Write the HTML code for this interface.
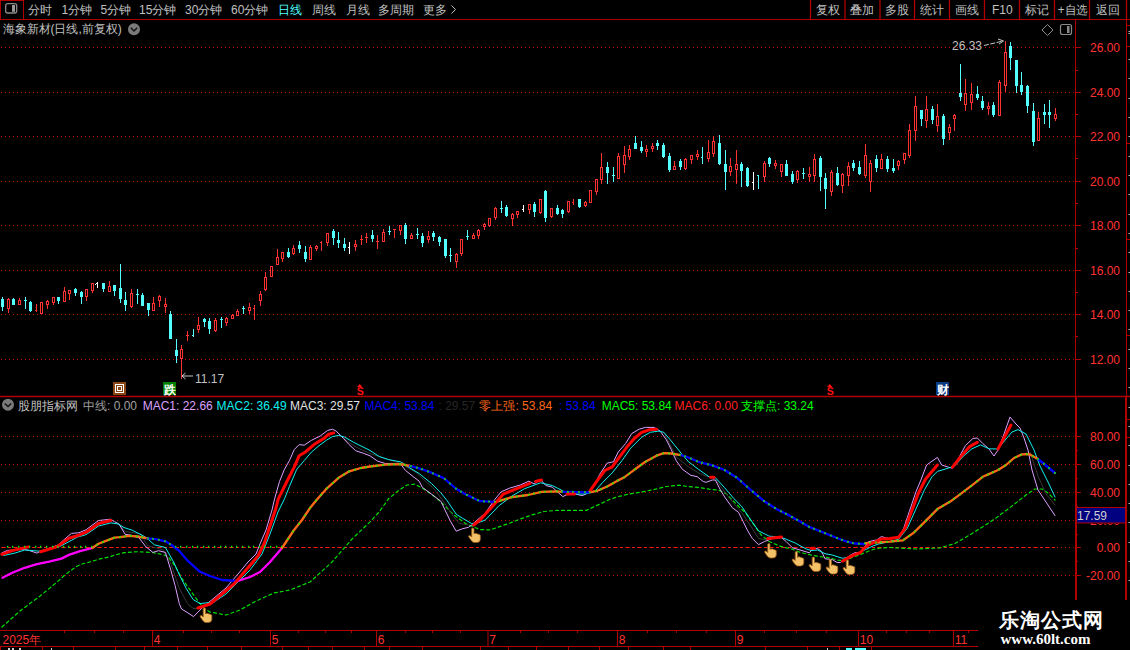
<!DOCTYPE html>
<html><head><meta charset="utf-8"><style>
html,body{margin:0;padding:0;background:#000;overflow:hidden}
svg{display:block;font-family:"Liberation Sans", sans-serif}
</style></head><body>
<svg width="1130" height="650" viewBox="0 0 1130 650">
<rect width="1130" height="650" fill="#000"/>
<rect x="0" y="0" width="1130" height="19" fill="#000"/>
<line x1="0" y1="19.5" x2="1130" y2="19.5" stroke="#b00000" stroke-width="1"/>
<rect x="0.5" y="0.5" width="23" height="19" fill="none" stroke="#b00000"/>
<rect x="5.7" y="3.7" width="11" height="9.3" rx="2" fill="none" stroke="#8a8a8a" stroke-width="1.3"/>
<rect x="12" y="5" width="3" height="6.8" fill="#999"/>
<text x="28" y="13.5" fill="#c0c0c0" font-size="12">分时</text>
<text x="61.5" y="13.5" fill="#c0c0c0" font-size="12">1分钟</text>
<text x="100.5" y="13.5" fill="#c0c0c0" font-size="12">5分钟</text>
<text x="139" y="13.5" fill="#c0c0c0" font-size="12">15分钟</text>
<text x="185" y="13.5" fill="#c0c0c0" font-size="12">30分钟</text>
<text x="231" y="13.5" fill="#c0c0c0" font-size="12">60分钟</text>
<text x="278" y="13.5" fill="#54ffff" font-size="12">日线</text>
<text x="312" y="13.5" fill="#c0c0c0" font-size="12">周线</text>
<text x="346" y="13.5" fill="#c0c0c0" font-size="12">月线</text>
<text x="378" y="13.5" fill="#c0c0c0" font-size="12">多周期</text>
<text x="422.5" y="13.5" fill="#c0c0c0" font-size="12">更多</text>
<path d="M451.5 5.5 L455.5 9.5 L451.5 13.5" fill="none" stroke="#c0c0c0" stroke-width="1"/>
<line x1="810.5" y1="0" x2="810.5" y2="19" stroke="#b00000" stroke-width="1.3"/>
<line x1="845" y1="0" x2="845" y2="19" stroke="#b00000" stroke-width="1.3"/>
<line x1="880" y1="0" x2="880" y2="19" stroke="#b00000" stroke-width="1.3"/>
<line x1="914.5" y1="0" x2="914.5" y2="19" stroke="#b00000" stroke-width="1.3"/>
<line x1="949.5" y1="0" x2="949.5" y2="19" stroke="#b00000" stroke-width="1.3"/>
<line x1="984.5" y1="0" x2="984.5" y2="19" stroke="#b00000" stroke-width="1.3"/>
<line x1="1019.5" y1="0" x2="1019.5" y2="19" stroke="#b00000" stroke-width="1.3"/>
<line x1="1054.5" y1="0" x2="1054.5" y2="19" stroke="#b00000" stroke-width="1.3"/>
<line x1="1089.5" y1="0" x2="1089.5" y2="19" stroke="#b00000" stroke-width="1.3"/>
<line x1="1126.5" y1="0" x2="1126.5" y2="19" stroke="#b00000" stroke-width="1.3"/>
<text x="816" y="13.5" fill="#c0c0c0" font-size="12">复权</text>
<text x="849.6" y="13.5" fill="#c0c0c0" font-size="12">叠加</text>
<text x="884.5" y="13.5" fill="#c0c0c0" font-size="12">多股</text>
<text x="919.6" y="13.5" fill="#c0c0c0" font-size="12">统计</text>
<text x="954.5" y="13.5" fill="#c0c0c0" font-size="12">画线</text>
<text x="992" y="13.5" fill="#c0c0c0" font-size="12">F10</text>
<text x="1025" y="13.5" fill="#c0c0c0" font-size="12">标记</text>
<text x="1057.8" y="13.5" fill="#c0c0c0" font-size="12" textLength="30" lengthAdjust="spacingAndGlyphs">+自选</text>
<text x="1096" y="13.5" fill="#c0c0c0" font-size="12">返回</text>
<text x="2.5" y="33.3" fill="#c0c0c0" font-size="12">海象新材(日线,前复权)</text>
<circle cx="134" cy="29.2" r="6" fill="#7a7a7a"/>
<path d="M130.8 27.8 L134 31 L137.2 27.8" fill="none" stroke="#111" stroke-width="1.4"/>
<path d="M1047.5 24.5 L1053 30 L1047.5 35.5 L1042 30 Z" fill="none" stroke="#8a8a8a" stroke-width="1"/>
<rect x="1060.5" y="24.5" width="11" height="10" rx="2" fill="none" stroke="#8a8a8a" stroke-width="1.2"/>
<rect x="1067" y="26" width="2.5" height="7" fill="#8a8a8a"/>
<line x1="0" y1="47.5" x2="1075" y2="47.5" stroke="#b80000" stroke-width="1" stroke-dasharray="1 3" stroke-dashoffset="-1"/>
<line x1="1075" y1="47.5" x2="1081" y2="47.5" stroke="#b00000" stroke-width="1"/>
<text x="1120" y="52" fill="#ff3232" font-size="12" text-anchor="end">26.00</text>
<line x1="0" y1="92.5" x2="1075" y2="92.5" stroke="#b80000" stroke-width="1" stroke-dasharray="1 3" stroke-dashoffset="-1"/>
<line x1="1075" y1="92.5" x2="1081" y2="92.5" stroke="#b00000" stroke-width="1"/>
<text x="1120" y="97" fill="#ff3232" font-size="12" text-anchor="end">24.00</text>
<line x1="0" y1="136.5" x2="1075" y2="136.5" stroke="#b80000" stroke-width="1" stroke-dasharray="1 3" stroke-dashoffset="-1"/>
<line x1="1075" y1="136.5" x2="1081" y2="136.5" stroke="#b00000" stroke-width="1"/>
<text x="1120" y="141" fill="#ff3232" font-size="12" text-anchor="end">22.00</text>
<line x1="0" y1="181.5" x2="1075" y2="181.5" stroke="#b80000" stroke-width="1" stroke-dasharray="1 3" stroke-dashoffset="-1"/>
<line x1="1075" y1="181.5" x2="1081" y2="181.5" stroke="#b00000" stroke-width="1"/>
<text x="1120" y="186" fill="#ff3232" font-size="12" text-anchor="end">20.00</text>
<line x1="0" y1="225.5" x2="1075" y2="225.5" stroke="#b80000" stroke-width="1" stroke-dasharray="1 3" stroke-dashoffset="-1"/>
<line x1="1075" y1="225.5" x2="1081" y2="225.5" stroke="#b00000" stroke-width="1"/>
<text x="1120" y="230" fill="#ff3232" font-size="12" text-anchor="end">18.00</text>
<line x1="0" y1="270.5" x2="1075" y2="270.5" stroke="#b80000" stroke-width="1" stroke-dasharray="1 3" stroke-dashoffset="-1"/>
<line x1="1075" y1="270.5" x2="1081" y2="270.5" stroke="#b00000" stroke-width="1"/>
<text x="1120" y="275" fill="#ff3232" font-size="12" text-anchor="end">16.00</text>
<line x1="0" y1="314.5" x2="1075" y2="314.5" stroke="#b80000" stroke-width="1" stroke-dasharray="1 3" stroke-dashoffset="-1"/>
<line x1="1075" y1="314.5" x2="1081" y2="314.5" stroke="#b00000" stroke-width="1"/>
<text x="1120" y="319" fill="#ff3232" font-size="12" text-anchor="end">14.00</text>
<line x1="0" y1="359.5" x2="1075" y2="359.5" stroke="#b80000" stroke-width="1" stroke-dasharray="1 3" stroke-dashoffset="-1"/>
<line x1="1075" y1="359.5" x2="1081" y2="359.5" stroke="#b00000" stroke-width="1"/>
<text x="1120" y="364" fill="#ff3232" font-size="12" text-anchor="end">12.00</text>
<line x1="1075" y1="70.5" x2="1078" y2="70.5" stroke="#b00000" stroke-width="1"/>
<line x1="1075" y1="114.5" x2="1078" y2="114.5" stroke="#b00000" stroke-width="1"/>
<line x1="1075" y1="158.5" x2="1078" y2="158.5" stroke="#b00000" stroke-width="1"/>
<line x1="1075" y1="203.5" x2="1078" y2="203.5" stroke="#b00000" stroke-width="1"/>
<line x1="1075" y1="248.5" x2="1078" y2="248.5" stroke="#b00000" stroke-width="1"/>
<line x1="1075" y1="292.5" x2="1078" y2="292.5" stroke="#b00000" stroke-width="1"/>
<line x1="1075" y1="336.5" x2="1078" y2="336.5" stroke="#b00000" stroke-width="1"/>
<line x1="1075.5" y1="19" x2="1075.5" y2="396" stroke="#b00000" stroke-width="1"/>
<line x1="1076" y1="396" x2="1076" y2="600" stroke="#b00000" stroke-width="2"/>
<line x1="1126.5" y1="19" x2="1126.5" y2="396" stroke="#b00000" stroke-width="1"/>
<line x1="1126" y1="396" x2="1126" y2="600" stroke="#b00000" stroke-width="2"/>
<line x1="1126" y1="25.5" x2="1130" y2="25.5" stroke="#b00000" stroke-width="1"/>
<rect x="1127" y="25" width="3" height="1" fill="#b00000"/>
<rect x="1127" y="46" width="3" height="1" fill="#b00000"/>
<rect x="1127" y="143" width="3" height="1" fill="#b00000"/>
<rect x="1127" y="239" width="3" height="1" fill="#b00000"/>
<rect x="1127" y="335" width="3" height="1" fill="#b00000"/>
<rect x="1127" y="419" width="3" height="1" fill="#b00000"/>
<rect x="1127" y="437" width="3" height="1" fill="#b00000"/>
<rect x="1128.5" y="59" width="1.5" height="1" fill="#bbbbbb"/>
<rect x="1128.5" y="78" width="1.5" height="1" fill="#bbbbbb"/>
<rect x="1128.5" y="98" width="1.5" height="1" fill="#bbbbbb"/>
<rect x="1128.5" y="117" width="1.5" height="1" fill="#bbbbbb"/>
<rect x="1128.5" y="136" width="1.5" height="1" fill="#bbbbbb"/>
<rect x="1128.5" y="156" width="1.5" height="1" fill="#bbbbbb"/>
<rect x="1128.5" y="175" width="1.5" height="1" fill="#bbbbbb"/>
<rect x="1128.5" y="194" width="1.5" height="1" fill="#bbbbbb"/>
<rect x="1128.5" y="214" width="1.5" height="1" fill="#bbbbbb"/>
<rect x="1128.5" y="233" width="1.5" height="1" fill="#bbbbbb"/>
<rect x="1128.5" y="252" width="1.5" height="1" fill="#bbbbbb"/>
<rect x="1128.5" y="272" width="1.5" height="1" fill="#bbbbbb"/>
<rect x="1128.5" y="291" width="1.5" height="1" fill="#bbbbbb"/>
<rect x="1128.5" y="310" width="1.5" height="1" fill="#bbbbbb"/>
<rect x="1128.5" y="329" width="1.5" height="1" fill="#bbbbbb"/>
<rect x="1128.5" y="349" width="1.5" height="1" fill="#bbbbbb"/>
<rect x="1128.5" y="368" width="1.5" height="1" fill="#bbbbbb"/>
<rect x="1128.5" y="387" width="1.5" height="1" fill="#bbbbbb"/>
<rect x="1128.5" y="407" width="1.5" height="1" fill="#bbbbbb"/>
<rect x="1128.5" y="426" width="1.5" height="1" fill="#bbbbbb"/>
<rect x="1128.5" y="445" width="1.5" height="1" fill="#bbbbbb"/>
<rect x="1128.5" y="465" width="1.5" height="1" fill="#bbbbbb"/>
<rect x="1128.5" y="484" width="1.5" height="1" fill="#bbbbbb"/>
<rect x="1128.5" y="503" width="1.5" height="1" fill="#bbbbbb"/>
<rect x="1128.5" y="522" width="1.5" height="1" fill="#bbbbbb"/>
<rect x="1128.5" y="542" width="1.5" height="1" fill="#bbbbbb"/>
<rect x="1128.5" y="561" width="1.5" height="1" fill="#bbbbbb"/>
<rect x="1128.5" y="580" width="1.5" height="1" fill="#bbbbbb"/>
<rect x="1128.5" y="600" width="1.5" height="1" fill="#bbbbbb"/>
<rect x="1128.5" y="31" width="1.5" height="1" fill="#bbb"/><rect x="1128.5" y="33" width="1.5" height="1" fill="#bbb"/>
<line x1="0" y1="396.5" x2="1130" y2="396.5" stroke="#b00000" stroke-width="1.6"/>
<rect x="2" y="297" width="1" height="14" fill="#54ffff"/>
<rect x="1" y="299" width="3" height="8" fill="#54ffff"/>
<rect x="8" y="298" width="1" height="15" fill="#ff3232"/>
<rect x="7" y="299" width="3" height="10" fill="#ff3232"/>
<rect x="8" y="300" width="1" height="8" fill="#000"/>
<rect x="13" y="298" width="1" height="7" fill="#54ffff"/>
<rect x="12" y="299" width="3" height="6" fill="#54ffff"/>
<rect x="19" y="298" width="1" height="7" fill="#ff3232"/>
<rect x="18" y="300" width="3" height="5" fill="#ff3232"/>
<rect x="19" y="301" width="1" height="3" fill="#000"/>
<rect x="25" y="297" width="1" height="12" fill="#54ffff"/>
<rect x="24" y="300" width="3" height="1" fill="#54ffff"/>
<rect x="30" y="301" width="1" height="11" fill="#54ffff"/>
<rect x="29" y="302" width="3" height="9" fill="#54ffff"/>
<rect x="36" y="304" width="1" height="8" fill="#ff3232"/>
<rect x="35" y="310" width="1" height="1" fill="#ff3232"/>
<rect x="41" y="302" width="1" height="12" fill="#ff3232"/>
<rect x="40" y="302" width="3" height="12" fill="#ff3232"/>
<rect x="41" y="303" width="1" height="10" fill="#000"/>
<rect x="47" y="300" width="1" height="9" fill="#ff3232"/>
<rect x="46" y="301" width="3" height="4" fill="#ff3232"/>
<rect x="47" y="302" width="1" height="2" fill="#000"/>
<rect x="53" y="297" width="1" height="8" fill="#ff3232"/>
<rect x="52" y="297" width="3" height="6" fill="#ff3232"/>
<rect x="53" y="298" width="1" height="4" fill="#000"/>
<rect x="58" y="297" width="1" height="7" fill="#54ffff"/>
<rect x="57" y="297" width="3" height="4" fill="#54ffff"/>
<rect x="64" y="287" width="1" height="15" fill="#ff3232"/>
<rect x="63" y="291" width="3" height="11" fill="#ff3232"/>
<rect x="64" y="292" width="1" height="9" fill="#000"/>
<rect x="69" y="290" width="1" height="10" fill="#ff3232"/>
<rect x="68" y="290" width="3" height="4" fill="#ff3232"/>
<rect x="69" y="291" width="1" height="2" fill="#000"/>
<rect x="75" y="288" width="1" height="8" fill="#54ffff"/>
<rect x="74" y="289" width="3" height="4" fill="#54ffff"/>
<rect x="81" y="291" width="1" height="13" fill="#54ffff"/>
<rect x="80" y="292" width="3" height="5" fill="#54ffff"/>
<rect x="86" y="289" width="1" height="12" fill="#ff3232"/>
<rect x="85" y="289" width="3" height="8" fill="#ff3232"/>
<rect x="86" y="290" width="1" height="6" fill="#000"/>
<rect x="92" y="283" width="1" height="10" fill="#ff3232"/>
<rect x="91" y="283" width="3" height="8" fill="#ff3232"/>
<rect x="92" y="284" width="1" height="6" fill="#000"/>
<rect x="103" y="283" width="1" height="9" fill="#54ffff"/>
<rect x="102" y="283" width="3" height="6" fill="#54ffff"/>
<rect x="109" y="281" width="1" height="11" fill="#ff3232"/>
<rect x="108" y="286" width="3" height="6" fill="#ff3232"/>
<rect x="109" y="287" width="1" height="4" fill="#000"/>
<rect x="114" y="285" width="1" height="11" fill="#54ffff"/>
<rect x="113" y="285" width="3" height="6" fill="#54ffff"/>
<rect x="120" y="264" width="1" height="39" fill="#54ffff"/>
<rect x="119" y="288" width="3" height="11" fill="#54ffff"/>
<rect x="125" y="292" width="1" height="19" fill="#54ffff"/>
<rect x="124" y="300" width="3" height="5" fill="#54ffff"/>
<rect x="131" y="289" width="1" height="19" fill="#ff3232"/>
<rect x="130" y="293" width="3" height="14" fill="#ff3232"/>
<rect x="131" y="294" width="1" height="12" fill="#000"/>
<rect x="137" y="289" width="1" height="15" fill="#54ffff"/>
<rect x="136" y="294" width="3" height="1" fill="#54ffff"/>
<rect x="142" y="293" width="1" height="13" fill="#54ffff"/>
<rect x="141" y="295" width="3" height="11" fill="#54ffff"/>
<rect x="148" y="303" width="1" height="13" fill="#54ffff"/>
<rect x="147" y="303" width="3" height="7" fill="#54ffff"/>
<rect x="153" y="297" width="1" height="14" fill="#ff3232"/>
<rect x="152" y="303" width="3" height="8" fill="#ff3232"/>
<rect x="153" y="304" width="1" height="6" fill="#000"/>
<rect x="159" y="295" width="1" height="12" fill="#ff3232"/>
<rect x="158" y="296" width="3" height="5" fill="#ff3232"/>
<rect x="159" y="297" width="1" height="3" fill="#000"/>
<rect x="165" y="298" width="1" height="15" fill="#ff3232"/>
<rect x="164" y="304" width="3" height="3" fill="#ff3232"/>
<rect x="165" y="305" width="1" height="1" fill="#000"/>
<rect x="170" y="311" width="1" height="28" fill="#54ffff"/>
<rect x="169" y="314" width="3" height="25" fill="#54ffff"/>
<rect x="176" y="339" width="1" height="24" fill="#54ffff"/>
<rect x="175" y="350" width="3" height="6" fill="#54ffff"/>
<rect x="181" y="345" width="1" height="34" fill="#ff3232"/>
<rect x="180" y="349" width="3" height="10" fill="#ff3232"/>
<rect x="181" y="350" width="1" height="8" fill="#000"/>
<rect x="187" y="331" width="1" height="10" fill="#ff3232"/>
<rect x="186" y="335" width="3" height="1" fill="#ff3232"/>
<rect x="193" y="329" width="1" height="8" fill="#54ffff"/>
<rect x="192" y="335" width="1" height="1" fill="#54ffff"/>
<rect x="198" y="317" width="1" height="16" fill="#ff3232"/>
<rect x="197" y="325" width="3" height="5" fill="#ff3232"/>
<rect x="198" y="326" width="1" height="3" fill="#000"/>
<rect x="204" y="318" width="1" height="9" fill="#54ffff"/>
<rect x="203" y="319" width="3" height="3" fill="#54ffff"/>
<rect x="209" y="318" width="1" height="16" fill="#54ffff"/>
<rect x="208" y="321" width="3" height="8" fill="#54ffff"/>
<rect x="215" y="318" width="1" height="14" fill="#ff3232"/>
<rect x="214" y="320" width="3" height="11" fill="#ff3232"/>
<rect x="215" y="321" width="1" height="9" fill="#000"/>
<rect x="221" y="317" width="1" height="11" fill="#54ffff"/>
<rect x="220" y="319" width="3" height="1" fill="#54ffff"/>
<rect x="226" y="317" width="1" height="9" fill="#ff3232"/>
<rect x="225" y="318" width="3" height="5" fill="#ff3232"/>
<rect x="226" y="319" width="1" height="3" fill="#000"/>
<rect x="232" y="314" width="1" height="5" fill="#ff3232"/>
<rect x="231" y="315" width="3" height="4" fill="#ff3232"/>
<rect x="232" y="316" width="1" height="2" fill="#000"/>
<rect x="237" y="309" width="1" height="7" fill="#ff3232"/>
<rect x="236" y="311" width="3" height="5" fill="#ff3232"/>
<rect x="237" y="312" width="1" height="3" fill="#000"/>
<rect x="243" y="306" width="1" height="8" fill="#54ffff"/>
<rect x="242" y="308" width="3" height="1" fill="#54ffff"/>
<rect x="249" y="303" width="1" height="11" fill="#ff3232"/>
<rect x="248" y="307" width="3" height="4" fill="#ff3232"/>
<rect x="249" y="308" width="1" height="2" fill="#000"/>
<rect x="254" y="305" width="1" height="15" fill="#ff3232"/>
<rect x="253" y="308" width="1" height="1" fill="#ff3232"/>
<rect x="260" y="291" width="1" height="15" fill="#ff3232"/>
<rect x="259" y="294" width="3" height="7" fill="#ff3232"/>
<rect x="260" y="295" width="1" height="5" fill="#000"/>
<rect x="265" y="272" width="1" height="19" fill="#ff3232"/>
<rect x="264" y="277" width="3" height="13" fill="#ff3232"/>
<rect x="265" y="278" width="1" height="11" fill="#000"/>
<rect x="271" y="266" width="1" height="11" fill="#ff3232"/>
<rect x="270" y="266" width="3" height="11" fill="#ff3232"/>
<rect x="271" y="267" width="1" height="9" fill="#000"/>
<rect x="277" y="249" width="1" height="16" fill="#ff3232"/>
<rect x="276" y="257" width="3" height="8" fill="#ff3232"/>
<rect x="277" y="258" width="1" height="6" fill="#000"/>
<rect x="282" y="252" width="1" height="10" fill="#ff3232"/>
<rect x="281" y="252" width="3" height="7" fill="#ff3232"/>
<rect x="282" y="253" width="1" height="5" fill="#000"/>
<rect x="288" y="248" width="1" height="10" fill="#54ffff"/>
<rect x="287" y="252" width="3" height="5" fill="#54ffff"/>
<rect x="293" y="245" width="1" height="10" fill="#ff3232"/>
<rect x="292" y="248" width="3" height="6" fill="#ff3232"/>
<rect x="293" y="249" width="1" height="4" fill="#000"/>
<rect x="299" y="241" width="1" height="12" fill="#54ffff"/>
<rect x="298" y="245" width="3" height="4" fill="#54ffff"/>
<rect x="305" y="246" width="1" height="16" fill="#54ffff"/>
<rect x="304" y="252" width="3" height="7" fill="#54ffff"/>
<rect x="310" y="245" width="1" height="15" fill="#ff3232"/>
<rect x="309" y="247" width="3" height="13" fill="#ff3232"/>
<rect x="310" y="248" width="1" height="11" fill="#000"/>
<rect x="316" y="245" width="1" height="6" fill="#ff3232"/>
<rect x="315" y="246" width="3" height="3" fill="#ff3232"/>
<rect x="316" y="247" width="1" height="1" fill="#000"/>
<rect x="321" y="241" width="1" height="10" fill="#ff3232"/>
<rect x="320" y="242" width="1" height="1" fill="#ff3232"/>
<rect x="327" y="233" width="1" height="13" fill="#ff3232"/>
<rect x="326" y="233" width="3" height="10" fill="#ff3232"/>
<rect x="327" y="234" width="1" height="8" fill="#000"/>
<rect x="333" y="229" width="1" height="16" fill="#54ffff"/>
<rect x="332" y="231" width="3" height="7" fill="#54ffff"/>
<rect x="338" y="232" width="1" height="16" fill="#54ffff"/>
<rect x="337" y="240" width="3" height="3" fill="#54ffff"/>
<rect x="344" y="238" width="1" height="13" fill="#54ffff"/>
<rect x="343" y="244" width="3" height="4" fill="#54ffff"/>
<rect x="349" y="242" width="1" height="12" fill="#ffffff"/>
<rect x="348" y="247" width="1" height="1" fill="#ffffff"/>
<rect x="355" y="240" width="1" height="11" fill="#ff3232"/>
<rect x="354" y="244" width="3" height="3" fill="#ff3232"/>
<rect x="355" y="245" width="1" height="1" fill="#000"/>
<rect x="361" y="235" width="1" height="10" fill="#ff3232"/>
<rect x="360" y="239" width="3" height="1" fill="#ff3232"/>
<rect x="366" y="233" width="1" height="10" fill="#ff3232"/>
<rect x="365" y="237" width="3" height="1" fill="#ff3232"/>
<rect x="372" y="230" width="1" height="12" fill="#54ffff"/>
<rect x="371" y="235" width="3" height="4" fill="#54ffff"/>
<rect x="377" y="235" width="1" height="14" fill="#ff3232"/>
<rect x="376" y="241" width="3" height="1" fill="#ff3232"/>
<rect x="383" y="229" width="1" height="13" fill="#ff3232"/>
<rect x="382" y="232" width="3" height="10" fill="#ff3232"/>
<rect x="383" y="233" width="1" height="8" fill="#000"/>
<rect x="389" y="226" width="1" height="9" fill="#54ffff"/>
<rect x="388" y="231" width="3" height="1" fill="#54ffff"/>
<rect x="394" y="229" width="1" height="9" fill="#ff3232"/>
<rect x="393" y="229" width="3" height="1" fill="#ff3232"/>
<rect x="400" y="225" width="1" height="10" fill="#ff3232"/>
<rect x="399" y="225" width="3" height="6" fill="#ff3232"/>
<rect x="400" y="226" width="1" height="4" fill="#000"/>
<rect x="405" y="223" width="1" height="21" fill="#54ffff"/>
<rect x="404" y="225" width="3" height="14" fill="#54ffff"/>
<rect x="411" y="233" width="1" height="6" fill="#ff3232"/>
<rect x="410" y="235" width="3" height="4" fill="#ff3232"/>
<rect x="411" y="236" width="1" height="2" fill="#000"/>
<rect x="417" y="228" width="1" height="11" fill="#54ffff"/>
<rect x="416" y="234" width="3" height="1" fill="#54ffff"/>
<rect x="422" y="233" width="1" height="14" fill="#54ffff"/>
<rect x="421" y="236" width="3" height="7" fill="#54ffff"/>
<rect x="428" y="231" width="1" height="12" fill="#ff3232"/>
<rect x="427" y="236" width="3" height="4" fill="#ff3232"/>
<rect x="428" y="237" width="1" height="2" fill="#000"/>
<rect x="433" y="231" width="1" height="10" fill="#54ffff"/>
<rect x="432" y="233" width="3" height="4" fill="#54ffff"/>
<rect x="439" y="236" width="1" height="10" fill="#54ffff"/>
<rect x="438" y="237" width="3" height="5" fill="#54ffff"/>
<rect x="445" y="239" width="1" height="19" fill="#54ffff"/>
<rect x="444" y="239" width="3" height="17" fill="#54ffff"/>
<rect x="450" y="248" width="1" height="14" fill="#54ffff"/>
<rect x="449" y="255" width="3" height="1" fill="#54ffff"/>
<rect x="456" y="253" width="1" height="15" fill="#ff3232"/>
<rect x="455" y="254" width="3" height="8" fill="#ff3232"/>
<rect x="456" y="255" width="1" height="6" fill="#000"/>
<rect x="461" y="239" width="1" height="17" fill="#ff3232"/>
<rect x="460" y="239" width="3" height="15" fill="#ff3232"/>
<rect x="461" y="240" width="1" height="13" fill="#000"/>
<rect x="467" y="230" width="1" height="10" fill="#54ffff"/>
<rect x="466" y="236" width="3" height="1" fill="#54ffff"/>
<rect x="473" y="233" width="1" height="6" fill="#ff3232"/>
<rect x="472" y="235" width="3" height="4" fill="#ff3232"/>
<rect x="473" y="236" width="1" height="2" fill="#000"/>
<rect x="478" y="229" width="1" height="10" fill="#ff3232"/>
<rect x="477" y="230" width="3" height="6" fill="#ff3232"/>
<rect x="478" y="231" width="1" height="4" fill="#000"/>
<rect x="484" y="223" width="1" height="7" fill="#ff3232"/>
<rect x="483" y="224" width="3" height="3" fill="#ff3232"/>
<rect x="484" y="225" width="1" height="1" fill="#000"/>
<rect x="489" y="218" width="1" height="9" fill="#ff3232"/>
<rect x="488" y="218" width="3" height="8" fill="#ff3232"/>
<rect x="489" y="219" width="1" height="6" fill="#000"/>
<rect x="495" y="207" width="1" height="13" fill="#ff3232"/>
<rect x="494" y="208" width="3" height="10" fill="#ff3232"/>
<rect x="495" y="209" width="1" height="8" fill="#000"/>
<rect x="501" y="201" width="1" height="12" fill="#54ffff"/>
<rect x="500" y="208" width="3" height="1" fill="#54ffff"/>
<rect x="506" y="205" width="1" height="12" fill="#54ffff"/>
<rect x="505" y="207" width="3" height="9" fill="#54ffff"/>
<rect x="512" y="213" width="1" height="13" fill="#ff3232"/>
<rect x="511" y="214" width="3" height="5" fill="#ff3232"/>
<rect x="512" y="215" width="1" height="3" fill="#000"/>
<rect x="517" y="211" width="1" height="7" fill="#ff3232"/>
<rect x="516" y="211" width="3" height="4" fill="#ff3232"/>
<rect x="517" y="212" width="1" height="2" fill="#000"/>
<rect x="523" y="205" width="1" height="7" fill="#ffffff"/>
<rect x="522" y="209" width="1" height="1" fill="#ffffff"/>
<rect x="529" y="204" width="1" height="10" fill="#ff3232"/>
<rect x="528" y="204" width="3" height="6" fill="#ff3232"/>
<rect x="529" y="205" width="1" height="4" fill="#000"/>
<rect x="534" y="202" width="1" height="15" fill="#54ffff"/>
<rect x="533" y="204" width="3" height="8" fill="#54ffff"/>
<rect x="540" y="199" width="1" height="15" fill="#ff3232"/>
<rect x="539" y="199" width="3" height="14" fill="#ff3232"/>
<rect x="540" y="200" width="1" height="12" fill="#000"/>
<rect x="545" y="190" width="1" height="32" fill="#54ffff"/>
<rect x="544" y="191" width="3" height="27" fill="#54ffff"/>
<rect x="551" y="208" width="1" height="10" fill="#ff3232"/>
<rect x="550" y="208" width="3" height="9" fill="#ff3232"/>
<rect x="551" y="209" width="1" height="7" fill="#000"/>
<rect x="557" y="205" width="1" height="10" fill="#54ffff"/>
<rect x="556" y="208" width="3" height="6" fill="#54ffff"/>
<rect x="562" y="209" width="1" height="9" fill="#54ffff"/>
<rect x="561" y="210" width="3" height="4" fill="#54ffff"/>
<rect x="568" y="201" width="1" height="12" fill="#ff3232"/>
<rect x="567" y="201" width="3" height="11" fill="#ff3232"/>
<rect x="568" y="202" width="1" height="9" fill="#000"/>
<rect x="573" y="199" width="1" height="6" fill="#ff3232"/>
<rect x="572" y="202" width="1" height="1" fill="#ff3232"/>
<rect x="579" y="199" width="1" height="9" fill="#54ffff"/>
<rect x="578" y="199" width="3" height="8" fill="#54ffff"/>
<rect x="585" y="201" width="1" height="6" fill="#ff3232"/>
<rect x="584" y="202" width="3" height="4" fill="#ff3232"/>
<rect x="585" y="203" width="1" height="2" fill="#000"/>
<rect x="590" y="190" width="1" height="13" fill="#ff3232"/>
<rect x="589" y="190" width="3" height="13" fill="#ff3232"/>
<rect x="590" y="191" width="1" height="11" fill="#000"/>
<rect x="596" y="179" width="1" height="16" fill="#ff3232"/>
<rect x="595" y="179" width="3" height="13" fill="#ff3232"/>
<rect x="596" y="180" width="1" height="11" fill="#000"/>
<rect x="601" y="153" width="1" height="31" fill="#ff3232"/>
<rect x="600" y="167" width="3" height="13" fill="#ff3232"/>
<rect x="601" y="168" width="1" height="11" fill="#000"/>
<rect x="607" y="162" width="1" height="22" fill="#54ffff"/>
<rect x="606" y="167" width="3" height="6" fill="#54ffff"/>
<rect x="613" y="167" width="1" height="15" fill="#54ffff"/>
<rect x="612" y="175" width="3" height="1" fill="#54ffff"/>
<rect x="618" y="153" width="1" height="26" fill="#ff3232"/>
<rect x="617" y="156" width="3" height="23" fill="#ff3232"/>
<rect x="618" y="157" width="1" height="21" fill="#000"/>
<rect x="624" y="146" width="1" height="27" fill="#ff3232"/>
<rect x="623" y="155" width="3" height="10" fill="#ff3232"/>
<rect x="624" y="156" width="1" height="8" fill="#000"/>
<rect x="629" y="145" width="1" height="15" fill="#ff3232"/>
<rect x="628" y="149" width="3" height="8" fill="#ff3232"/>
<rect x="629" y="150" width="1" height="6" fill="#000"/>
<rect x="635" y="136" width="1" height="13" fill="#54ffff"/>
<rect x="634" y="143" width="3" height="6" fill="#54ffff"/>
<rect x="641" y="141" width="1" height="12" fill="#54ffff"/>
<rect x="640" y="147" width="3" height="4" fill="#54ffff"/>
<rect x="646" y="145" width="1" height="12" fill="#ff3232"/>
<rect x="645" y="149" width="3" height="3" fill="#ff3232"/>
<rect x="646" y="150" width="1" height="1" fill="#000"/>
<rect x="652" y="143" width="1" height="9" fill="#ff3232"/>
<rect x="651" y="146" width="3" height="3" fill="#ff3232"/>
<rect x="652" y="147" width="1" height="1" fill="#000"/>
<rect x="657" y="140" width="1" height="10" fill="#54ffff"/>
<rect x="656" y="143" width="3" height="3" fill="#54ffff"/>
<rect x="663" y="143" width="1" height="15" fill="#54ffff"/>
<rect x="662" y="145" width="3" height="12" fill="#54ffff"/>
<rect x="669" y="153" width="1" height="19" fill="#54ffff"/>
<rect x="668" y="156" width="3" height="14" fill="#54ffff"/>
<rect x="674" y="161" width="1" height="9" fill="#ff3232"/>
<rect x="673" y="166" width="3" height="4" fill="#ff3232"/>
<rect x="674" y="167" width="1" height="2" fill="#000"/>
<rect x="680" y="159" width="1" height="11" fill="#54ffff"/>
<rect x="679" y="161" width="3" height="6" fill="#54ffff"/>
<rect x="685" y="158" width="1" height="12" fill="#ff3232"/>
<rect x="684" y="159" width="3" height="10" fill="#ff3232"/>
<rect x="685" y="160" width="1" height="8" fill="#000"/>
<rect x="691" y="155" width="1" height="9" fill="#ff3232"/>
<rect x="690" y="155" width="3" height="5" fill="#ff3232"/>
<rect x="691" y="156" width="1" height="3" fill="#000"/>
<rect x="697" y="150" width="1" height="10" fill="#ff3232"/>
<rect x="696" y="154" width="3" height="3" fill="#ff3232"/>
<rect x="697" y="155" width="1" height="1" fill="#000"/>
<rect x="702" y="147" width="1" height="17" fill="#54ffff"/>
<rect x="701" y="157" width="1" height="1" fill="#54ffff"/>
<rect x="708" y="140" width="1" height="22" fill="#ff3232"/>
<rect x="707" y="152" width="3" height="7" fill="#ff3232"/>
<rect x="708" y="153" width="1" height="5" fill="#000"/>
<rect x="713" y="136" width="1" height="21" fill="#ff3232"/>
<rect x="712" y="141" width="3" height="13" fill="#ff3232"/>
<rect x="713" y="142" width="1" height="11" fill="#000"/>
<rect x="719" y="135" width="1" height="30" fill="#54ffff"/>
<rect x="718" y="143" width="3" height="21" fill="#54ffff"/>
<rect x="725" y="150" width="1" height="40" fill="#54ffff"/>
<rect x="724" y="164" width="3" height="8" fill="#54ffff"/>
<rect x="730" y="158" width="1" height="18" fill="#ff3232"/>
<rect x="729" y="166" width="3" height="6" fill="#ff3232"/>
<rect x="730" y="167" width="1" height="4" fill="#000"/>
<rect x="736" y="150" width="1" height="34" fill="#ff3232"/>
<rect x="735" y="164" width="3" height="6" fill="#ff3232"/>
<rect x="736" y="165" width="1" height="4" fill="#000"/>
<rect x="741" y="162" width="1" height="25" fill="#54ffff"/>
<rect x="740" y="164" width="3" height="7" fill="#54ffff"/>
<rect x="747" y="167" width="1" height="20" fill="#54ffff"/>
<rect x="746" y="168" width="3" height="18" fill="#54ffff"/>
<rect x="753" y="172" width="1" height="18" fill="#ffffff"/>
<rect x="752" y="182" width="1" height="1" fill="#ffffff"/>
<rect x="758" y="175" width="1" height="14" fill="#54ffff"/>
<rect x="757" y="175" width="1" height="1" fill="#54ffff"/>
<rect x="764" y="161" width="1" height="21" fill="#ff3232"/>
<rect x="763" y="163" width="3" height="14" fill="#ff3232"/>
<rect x="764" y="164" width="1" height="12" fill="#000"/>
<rect x="769" y="157" width="1" height="10" fill="#54ffff"/>
<rect x="768" y="158" width="3" height="6" fill="#54ffff"/>
<rect x="775" y="160" width="1" height="9" fill="#ff3232"/>
<rect x="774" y="163" width="3" height="3" fill="#ff3232"/>
<rect x="775" y="164" width="1" height="1" fill="#000"/>
<rect x="781" y="164" width="1" height="13" fill="#ff3232"/>
<rect x="780" y="164" width="3" height="8" fill="#ff3232"/>
<rect x="781" y="165" width="1" height="6" fill="#000"/>
<rect x="786" y="160" width="1" height="16" fill="#54ffff"/>
<rect x="785" y="164" width="3" height="12" fill="#54ffff"/>
<rect x="792" y="171" width="1" height="13" fill="#54ffff"/>
<rect x="791" y="174" width="3" height="8" fill="#54ffff"/>
<rect x="797" y="170" width="1" height="13" fill="#ff3232"/>
<rect x="796" y="171" width="3" height="9" fill="#ff3232"/>
<rect x="797" y="172" width="1" height="7" fill="#000"/>
<rect x="803" y="168" width="1" height="11" fill="#54ffff"/>
<rect x="802" y="173" width="3" height="1" fill="#54ffff"/>
<rect x="809" y="167" width="1" height="15" fill="#ff3232"/>
<rect x="808" y="174" width="3" height="3" fill="#ff3232"/>
<rect x="809" y="175" width="1" height="1" fill="#000"/>
<rect x="814" y="154" width="1" height="28" fill="#ff3232"/>
<rect x="813" y="159" width="3" height="17" fill="#ff3232"/>
<rect x="814" y="160" width="1" height="15" fill="#000"/>
<rect x="820" y="156" width="1" height="35" fill="#54ffff"/>
<rect x="819" y="158" width="3" height="19" fill="#54ffff"/>
<rect x="825" y="173" width="1" height="36" fill="#54ffff"/>
<rect x="824" y="178" width="3" height="11" fill="#54ffff"/>
<rect x="831" y="170" width="1" height="26" fill="#ff3232"/>
<rect x="830" y="172" width="3" height="20" fill="#ff3232"/>
<rect x="831" y="173" width="1" height="18" fill="#000"/>
<rect x="837" y="167" width="1" height="19" fill="#54ffff"/>
<rect x="836" y="173" width="3" height="12" fill="#54ffff"/>
<rect x="842" y="173" width="1" height="20" fill="#ff3232"/>
<rect x="841" y="174" width="3" height="12" fill="#ff3232"/>
<rect x="842" y="175" width="1" height="10" fill="#000"/>
<rect x="848" y="162" width="1" height="24" fill="#ff3232"/>
<rect x="847" y="166" width="3" height="10" fill="#ff3232"/>
<rect x="848" y="167" width="1" height="8" fill="#000"/>
<rect x="853" y="160" width="1" height="11" fill="#54ffff"/>
<rect x="852" y="163" width="3" height="5" fill="#54ffff"/>
<rect x="859" y="161" width="1" height="14" fill="#54ffff"/>
<rect x="858" y="167" width="3" height="7" fill="#54ffff"/>
<rect x="865" y="144" width="1" height="34" fill="#ff3232"/>
<rect x="864" y="155" width="3" height="21" fill="#ff3232"/>
<rect x="865" y="156" width="1" height="19" fill="#000"/>
<rect x="870" y="160" width="1" height="32" fill="#ff3232"/>
<rect x="869" y="163" width="3" height="19" fill="#ff3232"/>
<rect x="870" y="164" width="1" height="17" fill="#000"/>
<rect x="876" y="155" width="1" height="17" fill="#54ffff"/>
<rect x="875" y="159" width="3" height="9" fill="#54ffff"/>
<rect x="881" y="154" width="1" height="15" fill="#ff3232"/>
<rect x="880" y="159" width="3" height="10" fill="#ff3232"/>
<rect x="881" y="160" width="1" height="8" fill="#000"/>
<rect x="887" y="156" width="1" height="16" fill="#54ffff"/>
<rect x="886" y="159" width="3" height="10" fill="#54ffff"/>
<rect x="893" y="159" width="1" height="14" fill="#54ffff"/>
<rect x="892" y="168" width="3" height="3" fill="#54ffff"/>
<rect x="898" y="160" width="1" height="10" fill="#ff3232"/>
<rect x="897" y="161" width="3" height="5" fill="#ff3232"/>
<rect x="898" y="162" width="1" height="3" fill="#000"/>
<rect x="904" y="153" width="1" height="11" fill="#ff3232"/>
<rect x="903" y="153" width="3" height="7" fill="#ff3232"/>
<rect x="904" y="154" width="1" height="5" fill="#000"/>
<rect x="909" y="124" width="1" height="34" fill="#ff3232"/>
<rect x="908" y="130" width="3" height="26" fill="#ff3232"/>
<rect x="909" y="131" width="1" height="24" fill="#000"/>
<rect x="915" y="96" width="1" height="45" fill="#ff3232"/>
<rect x="914" y="106" width="3" height="25" fill="#ff3232"/>
<rect x="915" y="107" width="1" height="23" fill="#000"/>
<rect x="921" y="110" width="1" height="16" fill="#54ffff"/>
<rect x="920" y="110" width="3" height="9" fill="#54ffff"/>
<rect x="926" y="96" width="1" height="32" fill="#ff3232"/>
<rect x="925" y="109" width="3" height="12" fill="#ff3232"/>
<rect x="926" y="110" width="1" height="10" fill="#000"/>
<rect x="932" y="106" width="1" height="18" fill="#54ffff"/>
<rect x="931" y="109" width="3" height="11" fill="#54ffff"/>
<rect x="937" y="104" width="1" height="28" fill="#ff3232"/>
<rect x="936" y="116" width="3" height="10" fill="#ff3232"/>
<rect x="937" y="117" width="1" height="8" fill="#000"/>
<rect x="943" y="114" width="1" height="31" fill="#54ffff"/>
<rect x="942" y="116" width="3" height="23" fill="#54ffff"/>
<rect x="949" y="124" width="1" height="16" fill="#ff3232"/>
<rect x="948" y="127" width="3" height="6" fill="#ff3232"/>
<rect x="949" y="128" width="1" height="4" fill="#000"/>
<rect x="954" y="114" width="1" height="17" fill="#ff3232"/>
<rect x="953" y="115" width="3" height="4" fill="#ff3232"/>
<rect x="954" y="116" width="1" height="2" fill="#000"/>
<rect x="960" y="64" width="1" height="37" fill="#54ffff"/>
<rect x="959" y="93" width="3" height="4" fill="#54ffff"/>
<rect x="965" y="79" width="1" height="32" fill="#ff3232"/>
<rect x="964" y="93" width="3" height="12" fill="#ff3232"/>
<rect x="965" y="94" width="1" height="10" fill="#000"/>
<rect x="971" y="83" width="1" height="27" fill="#ff3232"/>
<rect x="970" y="94" width="3" height="9" fill="#ff3232"/>
<rect x="971" y="95" width="1" height="7" fill="#000"/>
<rect x="977" y="86" width="1" height="14" fill="#54ffff"/>
<rect x="976" y="94" width="3" height="4" fill="#54ffff"/>
<rect x="982" y="96" width="1" height="14" fill="#54ffff"/>
<rect x="981" y="101" width="3" height="7" fill="#54ffff"/>
<rect x="988" y="102" width="1" height="13" fill="#ff3232"/>
<rect x="987" y="106" width="3" height="3" fill="#ff3232"/>
<rect x="988" y="107" width="1" height="1" fill="#000"/>
<rect x="993" y="102" width="1" height="15" fill="#54ffff"/>
<rect x="992" y="105" width="3" height="10" fill="#54ffff"/>
<rect x="999" y="80" width="1" height="36" fill="#ff3232"/>
<rect x="998" y="82" width="3" height="34" fill="#ff3232"/>
<rect x="999" y="83" width="1" height="32" fill="#000"/>
<rect x="1005" y="41" width="1" height="51" fill="#ff3232"/>
<rect x="1004" y="52" width="3" height="34" fill="#ff3232"/>
<rect x="1005" y="53" width="1" height="32" fill="#000"/>
<rect x="1010" y="42" width="1" height="28" fill="#54ffff"/>
<rect x="1009" y="46" width="3" height="12" fill="#54ffff"/>
<rect x="1016" y="60" width="1" height="33" fill="#54ffff"/>
<rect x="1015" y="60" width="3" height="26" fill="#54ffff"/>
<rect x="1021" y="72" width="1" height="23" fill="#54ffff"/>
<rect x="1020" y="85" width="3" height="7" fill="#54ffff"/>
<rect x="1027" y="85" width="1" height="28" fill="#54ffff"/>
<rect x="1026" y="86" width="3" height="20" fill="#54ffff"/>
<rect x="1033" y="103" width="1" height="43" fill="#54ffff"/>
<rect x="1032" y="111" width="3" height="31" fill="#54ffff"/>
<rect x="1038" y="112" width="1" height="29" fill="#ff3232"/>
<rect x="1037" y="118" width="3" height="23" fill="#ff3232"/>
<rect x="1038" y="119" width="1" height="21" fill="#000"/>
<rect x="1044" y="104" width="1" height="20" fill="#54ffff"/>
<rect x="1043" y="112" width="3" height="3" fill="#54ffff"/>
<rect x="1049" y="100" width="1" height="28" fill="#54ffff"/>
<rect x="1048" y="112" width="3" height="3" fill="#54ffff"/>
<rect x="1055" y="108" width="1" height="13" fill="#ff3232"/>
<rect x="1054" y="114" width="3" height="5" fill="#ff3232"/>
<rect x="1055" y="115" width="1" height="3" fill="#000"/>
<rect x="97" y="282" width="1" height="6" fill="#fff"/><rect x="96" y="283" width="1" height="1" fill="#fff"/><rect x="95" y="284" width="1" height="1" fill="#fff"/>
<text x="952" y="50" fill="#c0c0c0" font-size="12">26.33</text>
<path d="M984 45.5 L1003 41" fill="none" stroke="#c8c8c8" stroke-width="1" stroke-dasharray="5 1.5"/>
<path d="M998 39 L1003.5 41 L999 44" fill="none" stroke="#c8c8c8" stroke-width="1"/>
<path d="M182 376 L193 376 M182 376 L185.5 373 M182 376 L185.5 379" fill="none" stroke="#c8c8c8" stroke-width="1"/>
<text x="195" y="383" fill="#c0c0c0" font-size="12">11.17</text>
<rect x="113" y="382" width="13" height="13" fill="#8b4513"/>
<rect x="115.5" y="384.5" width="8" height="8" fill="none" stroke="#fff" stroke-width="1"/>
<rect x="117.5" y="386.5" width="4" height="4" fill="none" stroke="#fff" stroke-width="1"/>
<rect x="163" y="382" width="13" height="13" fill="#008000"/>
<text x="163.5" y="393.5" fill="#fff" font-size="11.5" font-weight="bold">跌</text>
<rect x="936" y="382" width="13" height="13" fill="#0a3a80"/>
<text x="936.5" y="393.5" fill="#fff" font-size="11.5" font-weight="bold">财</text>
<path d="M357 387 L359.7 384 L362.4 387 Z" fill="#ff1010"/>
<text x="356.7" y="395" fill="#ff1010" font-size="10.5" font-weight="bold">S</text>
<path d="M827 387 L829.7 384 L832.4 387 Z" fill="#ff1010"/>
<text x="826.7" y="395" fill="#ff1010" font-size="10.5" font-weight="bold">S</text>
<circle cx="8" cy="404.8" r="6" fill="#7a7a7a"/>
<path d="M4.8 403.4 L8 406.6 L11.2 403.4" fill="none" stroke="#111" stroke-width="1.4"/>
<text x="17.7" y="409.5" fill="#c0c0c0" font-size="12">股朋指标网</text>
<text x="83" y="409.5" fill="#a0a0a0" font-size="12">中线: 0.00</text>
<text x="142.7" y="409.5" fill="#dda0ff" font-size="12">MAC1: 22.66</text>
<text x="216.6" y="409.5" fill="#10f0f0" font-size="12">MAC2: 36.49</text>
<text x="290" y="409.5" fill="#e0e0e0" font-size="12">MAC3: 29.57</text>
<text x="364.4" y="409.5" fill="#0000ff" font-size="12">MAC4: 53.84</text>
<text x="438.5" y="409.5" fill="#262626" font-size="12">: 29.57</text>
<text x="479.4" y="409.5" fill="#ff6a1a" font-size="12">零上强: 53.84</text>
<text x="559" y="409.5" fill="#0000ff" font-size="12">: 53.84</text>
<text x="601.7" y="409.5" fill="#00ff00" font-size="12">MAC5: 53.84</text>
<text x="674.5" y="409.5" fill="#ff2020" font-size="12">MAC6: 0.00</text>
<text x="741" y="409.5" fill="#00ff00" font-size="12">支撑点: 33.24</text>
<line x1="0" y1="436.5" x2="1075" y2="436.5" stroke="#b80000" stroke-width="1" stroke-dasharray="1 3" stroke-dashoffset="-1"/>
<line x1="1076" y1="436.5" x2="1081" y2="436.5" stroke="#b00000" stroke-width="1"/>
<text x="1120" y="441" fill="#ff3232" font-size="12" text-anchor="end">80.00</text>
<line x1="0" y1="464.5" x2="1075" y2="464.5" stroke="#b80000" stroke-width="1" stroke-dasharray="1 3" stroke-dashoffset="-1"/>
<line x1="1076" y1="464.5" x2="1081" y2="464.5" stroke="#b00000" stroke-width="1"/>
<text x="1120" y="469" fill="#ff3232" font-size="12" text-anchor="end">60.00</text>
<line x1="0" y1="492.5" x2="1075" y2="492.5" stroke="#b80000" stroke-width="1" stroke-dasharray="1 3" stroke-dashoffset="-1"/>
<line x1="1076" y1="492.5" x2="1081" y2="492.5" stroke="#b00000" stroke-width="1"/>
<text x="1120" y="497" fill="#ff3232" font-size="12" text-anchor="end">40.00</text>
<line x1="0" y1="520.5" x2="1075" y2="520.5" stroke="#b80000" stroke-width="1" stroke-dasharray="1 3" stroke-dashoffset="-1"/>
<line x1="1076" y1="520.5" x2="1081" y2="520.5" stroke="#b00000" stroke-width="1"/>
<text x="1120" y="525" fill="#ff3232" font-size="12" text-anchor="end">20.00</text>
<line x1="0" y1="547.5" x2="1075" y2="547.5" stroke="#b80000" stroke-width="1" stroke-dasharray="1 3" stroke-dashoffset="-1"/>
<line x1="1076" y1="547.5" x2="1081" y2="547.5" stroke="#b00000" stroke-width="1"/>
<text x="1120" y="552" fill="#ff3232" font-size="12" text-anchor="end">0.00</text>
<line x1="0" y1="575.5" x2="1075" y2="575.5" stroke="#b80000" stroke-width="1" stroke-dasharray="1 3" stroke-dashoffset="-1"/>
<line x1="1076" y1="575.5" x2="1081" y2="575.5" stroke="#b00000" stroke-width="1"/>
<text x="1120" y="580" fill="#ff3232" font-size="12" text-anchor="end">-20.00</text>
<line x1="1076" y1="450.5" x2="1078" y2="450.5" stroke="#b00000" stroke-width="1"/>
<line x1="1076" y1="478.5" x2="1078" y2="478.5" stroke="#b00000" stroke-width="1"/>
<line x1="1076" y1="506.5" x2="1078" y2="506.5" stroke="#b00000" stroke-width="1"/>
<line x1="1076" y1="534.5" x2="1078" y2="534.5" stroke="#b00000" stroke-width="1"/>
<line x1="1076" y1="561.5" x2="1078" y2="561.5" stroke="#b00000" stroke-width="1"/>
<line x1="2" y1="547.5" x2="1057" y2="547.5" stroke="#ff1a1a" stroke-width="1.1" stroke-dasharray="3 3"/>
<polyline points="2.0,627.0 20.0,611.0 40.0,596.0 50.5,587.5 57.8,581.4 64.0,575.8 70.2,570.9 76.3,566.6 81.2,564.2 88.6,562.3 94.8,560.5 100.9,558.6 107.1,557.4 110.0,556.6 116.9,554.5 123.9,552.7 137.7,551.7 151.6,552.4 162.6,554.5 168.2,556.6 175.1,566.2 182.0,578.7 188.9,588.4 195.9,598.1 200.0,603.6 205.0,609.0 210.0,612.0 226.0,615.0 240.0,610.0 256.0,601.0 274.0,593.0 290.0,590.0 310.0,582.0 332.0,562.0 351.5,539.5 370.0,521.9 379.2,511.9 388.5,498.8 397.7,491.2 406.9,485.0 414.6,484.2 422.3,488.1 431.5,494.2 440.8,501.9 453.1,514.2 465.4,523.5 480.0,529.6 490.0,529.9 509.0,523.4 519.3,519.4 531.0,515.2 543.7,511.5 556.4,510.4 586.2,510.4 600.0,504.0 609.7,499.4 617.1,496.9 626.9,494.5 641.7,492.0 654.0,489.5 666.3,486.5 678.6,485.2 688.5,486.5 700.8,487.7 709.2,489.2 718.5,490.0 726.2,493.8 735.4,503.1 746.2,513.8 753.8,524.6 761.5,535.4 769.2,541.5 780.0,546.2 792.3,549.2 800.0,552.3 807.5,554.2 813.1,555.5 819.5,556.5 826.0,557.4 831.6,558.3 837.1,560.2 842.6,560.6 849.1,558.8 854.6,556.5 860.2,554.6 865.7,552.3 873.1,549.5 879.6,548.2 890.0,547.5 915.9,549.0 939.6,547.9 954.7,543.6 969.7,535.0 990.0,522.1 996.0,518.0 1012.0,506.0 1026.0,495.0 1035.0,489.0 1042.0,489.0 1048.0,493.0 1055.0,500.0" fill="none" stroke="#00e000" stroke-width="1.2" stroke-linejoin="round" stroke-linecap="round" stroke-dasharray="3 3" stroke-linecap="butt"/>
<polyline points="118.3,523.3 125.2,531.6 140.5,533.7 147.4,545.5 162.6,549.6 170.9,563.5 179.3,588.4 187.6,603.6 193.0,608.3 197.0,608.7" fill="none" stroke="#383838" stroke-width="1" stroke-linejoin="round" stroke-linecap="round" />
<polyline points="338.6,433.5 348.5,442.2 358.3,448.3 370.0,453.5 400.8,463.5 416.2,472.7 434.6,489.6 443.8,501.9 453.1,515.8 459.2,523.5 468.5,525.0" fill="none" stroke="#383838" stroke-width="1" stroke-linejoin="round" stroke-linecap="round" />
<polyline points="663.8,432.3 676.2,456.9 688.5,466.8 700.0,473.8 715.4,479.2 730.8,500.0 741.5,512.3 750.8,526.2 758.5,538.5 767.7,540.0" fill="none" stroke="#383838" stroke-width="1" stroke-linejoin="round" stroke-linecap="round" />
<polyline points="1030.0,452.0 1038.0,476.0 1046.0,494.0 1055.0,505.0" fill="none" stroke="#383838" stroke-width="1" stroke-linejoin="round" stroke-linecap="round" />
<polyline points="1.8,553.0 7.4,550.4 24.6,549.4 29.5,550.6 36.9,553.1 39.4,551.8 57.8,545.1 71.4,533.4 78.8,532.8 86.2,529.7 98.5,520.5 110.8,519.2 114.5,521.7 119.0,524.0 125.2,534.4 130.8,535.1 139.1,537.9 146.0,546.9 152.9,552.4 158.5,550.7 165.4,552.4 170.9,570.4 175.1,585.6 179.3,603.6 181.5,609.0 186.0,611.7 193.6,616.6 202.0,608.0 214.0,598.0 226.0,588.0 238.0,574.0 248.0,562.0 256.0,554.0 260.0,544.0 266.0,530.0 272.0,510.0 274.6,498.8 279.5,481.5 284.5,469.2 289.4,460.6 294.3,449.5 299.2,444.6 304.2,445.2 311.5,440.3 320.2,436.0 327.5,430.5 332.5,429.2 336.2,431.1 343.5,438.5 348.5,444.0 355.8,450.8 363.2,453.2 370.0,455.8 377.7,461.2 385.4,463.5 400.8,464.2 405.4,470.4 413.1,476.5 419.2,481.2 422.3,487.3 434.6,496.5 440.8,501.2 450.0,520.4 456.2,531.2 462.3,528.8 468.5,527.3 471.5,525.0 475.0,522.0 485.3,513.0 494.9,499.3 501.2,491.8 509.7,488.1 520.3,485.0 528.8,481.2 534.1,483.9 540.5,479.6 545.8,485.5 552.2,487.1 558.6,492.9 562.8,496.6 568.1,494.0 575.5,494.0 581.9,495.6 586.2,494.0 590.0,490.2 594.9,484.0 599.8,474.2 607.2,463.1 613.4,461.8 618.3,452.0 625.7,443.4 631.8,433.5 639.2,429.2 645.4,427.4 654.0,427.4 660.2,431.1 666.3,439.7 671.2,449.5 676.2,460.6 682.3,469.2 690.9,475.4 697.1,476.6 703.2,481.5 706.2,482.3 712.3,480.0 715.4,480.0 720.0,489.2 724.6,496.9 732.3,507.7 738.5,512.3 743.1,521.5 747.7,530.8 752.3,538.5 758.5,544.6 764.6,541.5 772.3,538.5 781.5,537.7 786.2,541.5 792.3,547.7 800.0,550.0 809.4,552.8 813.1,548.6 817.7,548.6 821.4,551.4 825.1,558.8 828.8,559.2 832.5,559.7 837.1,562.5 840.3,562.5 845.4,558.8 849.1,556.0 854.6,552.8 860.2,552.3 863.9,547.7 868.5,541.7 876.8,539.9 881.4,536.6 890.0,538.9 896.5,538.2 902.9,530.7 909.4,511.3 915.9,491.9 921.3,479.0 926.6,465.0 937.4,457.4 941.7,465.0 948.2,467.1 952.5,468.2 959.0,457.4 965.4,445.6 973.0,438.4 977.3,438.0 982.7,443.4 989.0,449.0 994.0,456.0 998.0,450.0 1004.0,434.0 1010.0,417.0 1016.0,424.0 1020.0,428.0 1024.0,438.0 1028.0,450.0 1032.0,470.0 1038.0,490.0 1046.0,502.0 1055.0,515.6" fill="none" stroke="#dda0ff" stroke-width="1" stroke-linejoin="round" stroke-linecap="round" />
<polyline points="3.7,555.5 14.8,553.1 24.6,550.0 33.2,550.6 39.4,551.2 59.1,546.9 77.5,537.1 86.2,534.6 98.5,526.0 110.8,522.9 118.3,524.0 123.9,527.5 132.2,530.2 143.2,535.8 147.4,538.5 154.3,544.8 165.4,547.5 173.7,562.1 179.3,574.6 186.2,588.4 193.1,599.5 200.0,603.6 214.0,602.0 226.0,594.0 238.0,582.0 250.0,570.0 262.0,554.0 270.0,534.0 278.0,512.0 284.5,498.8 289.4,486.5 296.8,469.2 304.2,460.6 311.5,452.0 318.9,445.8 326.3,440.3 332.5,436.6 338.6,435.4 344.8,437.2 353.4,442.2 363.2,447.1 370.0,450.4 379.2,456.5 388.5,459.6 400.8,461.9 410.0,468.1 419.2,473.5 431.5,483.5 440.8,492.7 446.9,500.4 456.2,514.2 462.3,518.1 471.5,523.5 475.0,524.0 485.3,520.0 499.1,505.6 511.8,496.1 524.6,488.7 540.5,482.8 552.2,485.5 562.8,490.8 570.2,494.0 585.1,494.0 594.9,491.4 602.3,482.8 612.2,472.9 622.0,460.6 630.6,448.3 641.7,437.2 650.3,432.3 658.9,431.1 663.8,432.3 671.2,440.9 681.1,453.2 688.5,461.8 698.3,469.2 709.2,476.9 715.4,477.7 724.6,487.7 733.8,498.5 741.5,506.2 750.8,520.0 758.5,530.8 769.2,536.2 780.0,536.9 786.2,539.2 795.4,543.1 802.0,546.8 806.6,549.1 811.2,550.5 817.7,550.0 825.1,553.7 832.5,555.1 838.0,556.9 842.6,558.3 850.0,556.9 856.5,554.2 863.9,550.5 869.4,547.7 873.1,545.9 878.6,544.0 890.0,541.5 898.6,539.3 907.2,528.5 915.9,509.1 924.5,489.7 932.0,476.8 937.4,471.4 948.2,468.2 954.7,466.0 963.3,456.3 971.9,448.8 980.5,444.9 989.1,448.8 998.0,449.0 1006.0,439.0 1012.0,432.0 1018.0,429.6 1026.0,434.0 1034.0,450.0 1040.0,466.0 1048.0,482.0 1055.0,497.0" fill="none" stroke="#10f0f0" stroke-width="1" stroke-linejoin="round" stroke-linecap="round" />
<polyline points="2.5,577.7 12.3,572.8 24.6,567.8 36.9,564.2 49.2,561.7 61.5,558.6 68.9,554.9 80.0,551.2 92.3,548.0" fill="none" stroke="#ff00ff" stroke-width="2.3" stroke-linejoin="round" stroke-linecap="round" />
<polyline points="92.3,548.0 98.5,543.8 104.6,541.4 114.5,537.7 120.0,537.1 129.4,535.8 137.7,536.5 147.4,538.3" fill="none" stroke="#ff6a1a" stroke-width="2.3" stroke-linejoin="round" stroke-linecap="round" />
<polyline points="147.4,538.3 155.7,539.2 165.4,541.3 172.3,545.5 179.3,551.0 187.6,560.7 200.0,571.8 210.0,576.0 222.0,580.0 238.0,581.0" fill="none" stroke="#0000ff" stroke-width="2.3" stroke-linejoin="round" stroke-linecap="round" />
<polyline points="238.0,581.0 250.0,577.0 260.0,572.0 270.0,562.0 282.0,548.0" fill="none" stroke="#ff00ff" stroke-width="2.3" stroke-linejoin="round" stroke-linecap="round" />
<polyline points="282.0,548.0 294.0,530.0 302.0,520.0 310.0,508.0 317.0,499.4 326.3,488.9 338.6,477.8 348.5,471.7 360.8,468.0 370.0,466.5 385.4,464.7 400.8,464.2 410.0,465.8" fill="none" stroke="#ff6a1a" stroke-width="2.3" stroke-linejoin="round" stroke-linecap="round" />
<polyline points="410.0,465.8 420.8,468.8 431.5,472.7 443.8,478.1 450.0,483.5 456.2,488.8 465.4,494.2 480.0,501.2 495.9,501.9" fill="none" stroke="#0000ff" stroke-width="2.3" stroke-linejoin="round" stroke-linecap="round" />
<polyline points="495.9,501.9 511.8,497.2 527.8,495.0 541.6,491.8 556.4,491.3 562.8,491.8" fill="none" stroke="#ff6a1a" stroke-width="2.3" stroke-linejoin="round" stroke-linecap="round" />
<polyline points="562.8,491.8 590.4,492.4" fill="none" stroke="#0000ff" stroke-width="2.3" stroke-linejoin="round" stroke-linecap="round" />
<polyline points="590.4,492.2 597.4,490.8 607.2,486.5 617.1,480.9 624.5,477.2 634.3,469.8 645.4,461.8 656.5,455.7 663.8,453.2 671.2,453.5 681.1,455.1" fill="none" stroke="#ff6a1a" stroke-width="2.3" stroke-linejoin="round" stroke-linecap="round" />
<polyline points="681.1,455.1 688.5,457.5 698.3,461.8 712.3,465.4 724.6,470.0 736.9,477.7 750.8,490.0 764.6,501.5 776.9,509.2 789.2,515.4 800.0,521.5 808.5,526.6 824.6,533.0 840.8,539.5 847.2,541.7 854.6,543.5 863.9,544.0 865.7,543.1" fill="none" stroke="#0000ff" stroke-width="2.3" stroke-linejoin="round" stroke-linecap="round" />
<polyline points="865.7,543.1 873.1,542.6 882.3,542.2 890.0,541.7 902.9,540.4 913.7,532.8 924.5,522.1 937.4,509.1 950.3,501.6 959.0,495.1 971.9,485.4 982.7,476.8 990.0,473.6 998.0,470.0 1006.0,465.0 1014.0,458.0 1022.0,454.4 1029.0,454.0 1038.0,459.0" fill="none" stroke="#ff6a1a" stroke-width="2.3" stroke-linejoin="round" stroke-linecap="round" />
<polyline points="1038.0,459.0 1055.0,473.0" fill="none" stroke="#0000ff" stroke-width="2.3" stroke-linejoin="round" stroke-linecap="round" />
<polyline points="1.8,554.3 12.3,550.6 28.3,546.9" fill="none" stroke="#ff0000" stroke-width="3.0" stroke-linejoin="round" stroke-linecap="round" />
<polyline points="40.6,551.8 56.6,546.9 68.9,538.3 78.8,535.2 86.2,532.2 98.5,523.5 110.8,520.5" fill="none" stroke="#ff0000" stroke-width="3.0" stroke-linejoin="round" stroke-linecap="round" />
<polyline points="198.0,608.0 210.0,604.0 222.0,594.0 234.0,584.0 246.0,570.0 258.0,556.0 264.0,544.0 270.0,526.0 276.0,508.0 278.3,498.8 286.9,481.5 294.3,466.8 299.2,455.7 305.4,452.0 314.0,444.6 323.8,438.5 328.8,434.2 333.7,432.9" fill="none" stroke="#ff0000" stroke-width="3.0" stroke-linejoin="round" stroke-linecap="round" />
<polyline points="473.7,525.0 480.0,520.0 495.9,502.5 503.4,494.0 529.9,483.4" fill="none" stroke="#ff0000" stroke-width="3.0" stroke-linejoin="round" stroke-linecap="round" />
<polyline points="535.5,481.5 541.5,480.0" fill="none" stroke="#ff0000" stroke-width="3.0" stroke-linejoin="round" stroke-linecap="round" />
<polyline points="567.0,494.0 574.5,494.0" fill="none" stroke="#ff0000" stroke-width="3.0" stroke-linejoin="round" stroke-linecap="round" />
<polyline points="590.0,490.8 597.4,480.3 604.8,470.5 612.2,466.8 619.5,456.9 626.9,447.1 634.3,438.5 641.7,432.3 649.1,429.8 656.5,429.2" fill="none" stroke="#ff0000" stroke-width="3.0" stroke-linejoin="round" stroke-linecap="round" />
<polyline points="710.5,477.2 714.0,477.2" fill="none" stroke="#ff0000" stroke-width="3.0" stroke-linejoin="round" stroke-linecap="round" />
<polyline points="767.7,538.5 781.5,536.9" fill="none" stroke="#ff0000" stroke-width="3.0" stroke-linejoin="round" stroke-linecap="round" />
<polyline points="811.0,548.2 814.5,548.2" fill="none" stroke="#ff0000" stroke-width="3.0" stroke-linejoin="round" stroke-linecap="round" />
<polyline points="842.6,561.1 850.0,556.9 854.6,554.6 860.2,552.8 863.9,548.6 868.5,544.9 874.9,542.2 881.4,538.9 890.0,538.5 898.6,537.2 905.1,528.5 911.6,511.3 918.0,494.0 925.6,479.0 937.4,465.0" fill="none" stroke="#ff0000" stroke-width="3.0" stroke-linejoin="round" stroke-linecap="round" />
<polyline points="952.5,467.1 961.1,456.3 969.7,446.6 977.3,442.3" fill="none" stroke="#ff0000" stroke-width="3.0" stroke-linejoin="round" stroke-linecap="round" />
<polyline points="998.0,449.0 1004.5,437.0 1011.0,425.0" fill="none" stroke="#ff0000" stroke-width="3.0" stroke-linejoin="round" stroke-linecap="round" />
<rect x="7" y="545.8" width="1.3" height="1.9" fill="#00f000"/>
<rect x="12" y="545.8" width="1.3" height="1.9" fill="#00f000"/>
<rect x="18" y="545.8" width="1.3" height="1.9" fill="#00f000"/>
<rect x="24" y="545.8" width="1.3" height="1.9" fill="#00f000"/>
<rect x="29" y="545.8" width="1.3" height="1.9" fill="#00f000"/>
<rect x="35" y="545.8" width="1.3" height="1.9" fill="#00f000"/>
<rect x="40" y="545.8" width="1.3" height="1.9" fill="#00f000"/>
<rect x="46" y="545.8" width="1.3" height="1.9" fill="#00f000"/>
<rect x="52" y="545.8" width="1.3" height="1.9" fill="#00f000"/>
<rect x="57" y="545.8" width="1.3" height="1.9" fill="#00f000"/>
<rect x="63" y="545.8" width="1.3" height="1.9" fill="#00f000"/>
<rect x="68" y="545.8" width="1.3" height="1.9" fill="#00f000"/>
<rect x="74" y="545.8" width="1.3" height="1.9" fill="#00f000"/>
<rect x="80" y="545.8" width="1.3" height="1.9" fill="#00f000"/>
<rect x="85" y="545.8" width="1.3" height="1.9" fill="#00f000"/>
<rect x="91" y="545.8" width="1.3" height="1.9" fill="#00f000"/>
<rect x="96.2" y="543.8" width="1.5" height="2" fill="#22ee00"/>
<rect x="102.2" y="541.0" width="1.5" height="2" fill="#22ee00"/>
<rect x="108.2" y="538.8" width="1.5" height="2" fill="#22ee00"/>
<rect x="113.2" y="536.9" width="1.5" height="2" fill="#22ee00"/>
<rect x="119.2" y="536.1" width="1.5" height="2" fill="#22ee00"/>
<rect x="124.2" y="535.4" width="1.5" height="2" fill="#22ee00"/>
<rect x="130.2" y="534.9" width="1.5" height="2" fill="#22ee00"/>
<rect x="136.2" y="535.4" width="1.5" height="2" fill="#22ee00"/>
<rect x="141.2" y="536.3" width="1.5" height="2" fill="#22ee00"/>
<rect x="147.2" y="537.4" width="1.5" height="2" fill="#22ee00"/>
<rect x="152.2" y="537.9" width="1.5" height="2" fill="#22ee00"/>
<rect x="158.2" y="538.9" width="1.5" height="2" fill="#22ee00"/>
<rect x="164.2" y="540.2" width="1.5" height="2" fill="#22ee00"/>
<rect x="169.2" y="543.1" width="1.5" height="2" fill="#22ee00"/>
<rect x="175" y="545.8" width="1.3" height="1.9" fill="#00f000"/>
<rect x="180" y="545.8" width="1.3" height="1.9" fill="#00f000"/>
<rect x="186" y="545.8" width="1.3" height="1.9" fill="#00f000"/>
<rect x="192" y="545.8" width="1.3" height="1.9" fill="#00f000"/>
<rect x="197" y="545.8" width="1.3" height="1.9" fill="#00f000"/>
<rect x="203" y="545.8" width="1.3" height="1.9" fill="#00f000"/>
<rect x="208" y="545.8" width="1.3" height="1.9" fill="#00f000"/>
<rect x="214" y="545.8" width="1.3" height="1.9" fill="#00f000"/>
<rect x="220" y="545.8" width="1.3" height="1.9" fill="#00f000"/>
<rect x="225" y="545.8" width="1.3" height="1.9" fill="#00f000"/>
<rect x="231" y="545.8" width="1.3" height="1.9" fill="#00f000"/>
<rect x="236" y="545.8" width="1.3" height="1.9" fill="#00f000"/>
<rect x="242" y="545.8" width="1.3" height="1.9" fill="#00f000"/>
<rect x="248" y="545.8" width="1.3" height="1.9" fill="#00f000"/>
<rect x="253" y="545.8" width="1.3" height="1.9" fill="#00f000"/>
<rect x="259" y="545.8" width="1.3" height="1.9" fill="#00f000"/>
<rect x="264" y="545.8" width="1.3" height="1.9" fill="#00f000"/>
<rect x="270" y="545.8" width="1.3" height="1.9" fill="#00f000"/>
<rect x="276" y="545.8" width="1.3" height="1.9" fill="#00f000"/>
<rect x="281" y="545.8" width="1.3" height="1.9" fill="#00f000"/>
<rect x="287.2" y="538.0" width="1.5" height="2" fill="#22ee00"/>
<rect x="292.2" y="530.5" width="1.5" height="2" fill="#22ee00"/>
<rect x="298.2" y="522.8" width="1.5" height="2" fill="#22ee00"/>
<rect x="304.2" y="514.5" width="1.5" height="2" fill="#22ee00"/>
<rect x="309.2" y="507.0" width="1.5" height="2" fill="#22ee00"/>
<rect x="315.2" y="499.6" width="1.5" height="2" fill="#22ee00"/>
<rect x="320.2" y="493.9" width="1.5" height="2" fill="#22ee00"/>
<rect x="326.2" y="487.3" width="1.5" height="2" fill="#22ee00"/>
<rect x="332.2" y="481.9" width="1.5" height="2" fill="#22ee00"/>
<rect x="337.2" y="477.3" width="1.5" height="2" fill="#22ee00"/>
<rect x="343.2" y="473.5" width="1.5" height="2" fill="#22ee00"/>
<rect x="348.2" y="470.5" width="1.5" height="2" fill="#22ee00"/>
<rect x="354.2" y="468.7" width="1.5" height="2" fill="#22ee00"/>
<rect x="360.2" y="467.0" width="1.5" height="2" fill="#22ee00"/>
<rect x="365.2" y="466.2" width="1.5" height="2" fill="#22ee00"/>
<rect x="371.2" y="465.3" width="1.5" height="2" fill="#22ee00"/>
<rect x="376.2" y="464.7" width="1.5" height="2" fill="#22ee00"/>
<rect x="382.2" y="464.0" width="1.5" height="2" fill="#22ee00"/>
<rect x="388.2" y="463.6" width="1.5" height="2" fill="#22ee00"/>
<rect x="393.2" y="463.4" width="1.5" height="2" fill="#22ee00"/>
<rect x="399.2" y="463.2" width="1.5" height="2" fill="#22ee00"/>
<rect x="404.2" y="463.9" width="1.5" height="2" fill="#22ee00"/>
<rect x="410.2" y="465.1" width="1.5" height="2" fill="#22ee00"/>
<rect x="416.2" y="466.7" width="1.5" height="2" fill="#22ee00"/>
<rect x="421.2" y="468.2" width="1.5" height="2" fill="#22ee00"/>
<rect x="427.2" y="470.4" width="1.5" height="2" fill="#22ee00"/>
<rect x="432.2" y="472.4" width="1.5" height="2" fill="#22ee00"/>
<rect x="438.2" y="475.0" width="1.5" height="2" fill="#22ee00"/>
<rect x="444.2" y="478.1" width="1.5" height="2" fill="#22ee00"/>
<rect x="449.2" y="482.5" width="1.5" height="2" fill="#22ee00"/>
<rect x="455.2" y="487.6" width="1.5" height="2" fill="#22ee00"/>
<rect x="460.2" y="490.6" width="1.5" height="2" fill="#22ee00"/>
<rect x="466.2" y="494.0" width="1.5" height="2" fill="#22ee00"/>
<rect x="472.2" y="496.8" width="1.5" height="2" fill="#22ee00"/>
<rect x="477.2" y="499.2" width="1.5" height="2" fill="#22ee00"/>
<rect x="483.2" y="500.4" width="1.5" height="2" fill="#22ee00"/>
<rect x="488.2" y="500.6" width="1.5" height="2" fill="#22ee00"/>
<rect x="494.2" y="500.9" width="1.5" height="2" fill="#22ee00"/>
<rect x="500.2" y="499.4" width="1.5" height="2" fill="#22ee00"/>
<rect x="505.2" y="497.9" width="1.5" height="2" fill="#22ee00"/>
<rect x="511.2" y="496.2" width="1.5" height="2" fill="#22ee00"/>
<rect x="516.2" y="495.5" width="1.5" height="2" fill="#22ee00"/>
<rect x="522.2" y="494.7" width="1.5" height="2" fill="#22ee00"/>
<rect x="528.2" y="493.7" width="1.5" height="2" fill="#22ee00"/>
<rect x="533.2" y="492.6" width="1.5" height="2" fill="#22ee00"/>
<rect x="539.2" y="491.2" width="1.5" height="2" fill="#22ee00"/>
<rect x="544.2" y="490.7" width="1.5" height="2" fill="#22ee00"/>
<rect x="550.2" y="490.5" width="1.5" height="2" fill="#22ee00"/>
<rect x="556.2" y="490.3" width="1.5" height="2" fill="#22ee00"/>
<rect x="561.2" y="490.7" width="1.5" height="2" fill="#22ee00"/>
<rect x="567.2" y="490.9" width="1.5" height="2" fill="#22ee00"/>
<rect x="572.2" y="490.9" width="1.5" height="2" fill="#22ee00"/>
<rect x="578.2" y="491.0" width="1.5" height="2" fill="#22ee00"/>
<rect x="584.2" y="491.1" width="1.5" height="2" fill="#22ee00"/>
<rect x="589.2" y="491.2" width="1.5" height="2" fill="#22ee00"/>
<rect x="595.2" y="490.1" width="1.5" height="2" fill="#22ee00"/>
<rect x="600.2" y="488.2" width="1.5" height="2" fill="#22ee00"/>
<rect x="606.2" y="485.6" width="1.5" height="2" fill="#22ee00"/>
<rect x="612.2" y="482.2" width="1.5" height="2" fill="#22ee00"/>
<rect x="617.2" y="479.4" width="1.5" height="2" fill="#22ee00"/>
<rect x="623.2" y="476.4" width="1.5" height="2" fill="#22ee00"/>
<rect x="628.2" y="472.8" width="1.5" height="2" fill="#22ee00"/>
<rect x="634.2" y="468.3" width="1.5" height="2" fill="#22ee00"/>
<rect x="640.2" y="464.0" width="1.5" height="2" fill="#22ee00"/>
<rect x="645.2" y="460.5" width="1.5" height="2" fill="#22ee00"/>
<rect x="651.2" y="457.2" width="1.5" height="2" fill="#22ee00"/>
<rect x="656.2" y="454.5" width="1.5" height="2" fill="#22ee00"/>
<rect x="662.2" y="452.5" width="1.5" height="2" fill="#22ee00"/>
<rect x="668.2" y="452.4" width="1.5" height="2" fill="#22ee00"/>
<rect x="673.2" y="453.0" width="1.5" height="2" fill="#22ee00"/>
<rect x="679.2" y="453.9" width="1.5" height="2" fill="#22ee00"/>
<rect x="684.2" y="455.4" width="1.5" height="2" fill="#22ee00"/>
<rect x="690.2" y="457.6" width="1.5" height="2" fill="#22ee00"/>
<rect x="696.2" y="460.2" width="1.5" height="2" fill="#22ee00"/>
<rect x="701.2" y="461.8" width="1.5" height="2" fill="#22ee00"/>
<rect x="707.2" y="463.3" width="1.5" height="2" fill="#22ee00"/>
<rect x="712.2" y="464.7" width="1.5" height="2" fill="#22ee00"/>
<rect x="718.2" y="466.9" width="1.5" height="2" fill="#22ee00"/>
<rect x="724.2" y="469.3" width="1.5" height="2" fill="#22ee00"/>
<rect x="729.2" y="472.4" width="1.5" height="2" fill="#22ee00"/>
<rect x="735.2" y="476.1" width="1.5" height="2" fill="#22ee00"/>
<rect x="740.2" y="480.3" width="1.5" height="2" fill="#22ee00"/>
<rect x="746.2" y="485.6" width="1.5" height="2" fill="#22ee00"/>
<rect x="752.2" y="490.8" width="1.5" height="2" fill="#22ee00"/>
<rect x="757.2" y="495.0" width="1.5" height="2" fill="#22ee00"/>
<rect x="763.2" y="500.0" width="1.5" height="2" fill="#22ee00"/>
<rect x="768.2" y="503.3" width="1.5" height="2" fill="#22ee00"/>
<rect x="774.2" y="507.0" width="1.5" height="2" fill="#22ee00"/>
<rect x="780.2" y="510.3" width="1.5" height="2" fill="#22ee00"/>
<rect x="785.2" y="512.8" width="1.5" height="2" fill="#22ee00"/>
<rect x="791.2" y="516.0" width="1.5" height="2" fill="#22ee00"/>
<rect x="796.2" y="518.8" width="1.5" height="2" fill="#22ee00"/>
<rect x="802.2" y="522.3" width="1.5" height="2" fill="#22ee00"/>
<rect x="808.2" y="525.8" width="1.5" height="2" fill="#22ee00"/>
<rect x="813.2" y="527.8" width="1.5" height="2" fill="#22ee00"/>
<rect x="819.2" y="530.2" width="1.5" height="2" fill="#22ee00"/>
<rect x="824.2" y="532.2" width="1.5" height="2" fill="#22ee00"/>
<rect x="830.2" y="534.6" width="1.5" height="2" fill="#22ee00"/>
<rect x="836.2" y="537.0" width="1.5" height="2" fill="#22ee00"/>
<rect x="841.2" y="538.9" width="1.5" height="2" fill="#22ee00"/>
<rect x="847.2" y="540.9" width="1.5" height="2" fill="#22ee00"/>
<rect x="852.2" y="542.1" width="1.5" height="2" fill="#22ee00"/>
<rect x="858.2" y="542.7" width="1.5" height="2" fill="#22ee00"/>
<rect x="864.2" y="542.5" width="1.5" height="2" fill="#22ee00"/>
<rect x="869.2" y="541.8" width="1.5" height="2" fill="#22ee00"/>
<rect x="875.2" y="541.5" width="1.5" height="2" fill="#22ee00"/>
<rect x="880.2" y="541.3" width="1.5" height="2" fill="#22ee00"/>
<rect x="886.2" y="540.9" width="1.5" height="2" fill="#22ee00"/>
<rect x="892.2" y="540.4" width="1.5" height="2" fill="#22ee00"/>
<rect x="897.2" y="539.9" width="1.5" height="2" fill="#22ee00"/>
<rect x="903.2" y="538.6" width="1.5" height="2" fill="#22ee00"/>
<rect x="908.2" y="535.1" width="1.5" height="2" fill="#22ee00"/>
<rect x="914.2" y="530.5" width="1.5" height="2" fill="#22ee00"/>
<rect x="920.2" y="524.6" width="1.5" height="2" fill="#22ee00"/>
<rect x="925.2" y="519.6" width="1.5" height="2" fill="#22ee00"/>
<rect x="931.2" y="513.5" width="1.5" height="2" fill="#22ee00"/>
<rect x="936.2" y="508.5" width="1.5" height="2" fill="#22ee00"/>
<rect x="942.2" y="504.8" width="1.5" height="2" fill="#22ee00"/>
<rect x="948.2" y="501.4" width="1.5" height="2" fill="#22ee00"/>
<rect x="953.2" y="497.8" width="1.5" height="2" fill="#22ee00"/>
<rect x="959.2" y="493.3" width="1.5" height="2" fill="#22ee00"/>
<rect x="964.2" y="489.6" width="1.5" height="2" fill="#22ee00"/>
<rect x="970.2" y="485.1" width="1.5" height="2" fill="#22ee00"/>
<rect x="976.2" y="480.3" width="1.5" height="2" fill="#22ee00"/>
<rect x="981.2" y="476.4" width="1.5" height="2" fill="#22ee00"/>
<rect x="987.2" y="473.5" width="1.5" height="2" fill="#22ee00"/>
<rect x="992.2" y="471.2" width="1.5" height="2" fill="#22ee00"/>
<rect x="998.2" y="468.4" width="1.5" height="2" fill="#22ee00"/>
<rect x="1004.2" y="464.6" width="1.5" height="2" fill="#22ee00"/>
<rect x="1009.2" y="460.5" width="1.5" height="2" fill="#22ee00"/>
<rect x="1015.2" y="456.1" width="1.5" height="2" fill="#22ee00"/>
<rect x="1020.2" y="453.8" width="1.5" height="2" fill="#22ee00"/>
<rect x="1026.2" y="453.1" width="1.5" height="2" fill="#22ee00"/>
<rect x="1032.2" y="455.2" width="1.5" height="2" fill="#22ee00"/>
<rect x="1037.2" y="458.0" width="1.5" height="2" fill="#22ee00"/>
<rect x="1043.2" y="462.9" width="1.5" height="2" fill="#22ee00"/>
<rect x="1048.2" y="467.1" width="1.5" height="2" fill="#22ee00"/>
<rect x="1054.2" y="472.0" width="1.5" height="2" fill="#22ee00"/>
<g transform="translate(201.0,608)"><path d="M2.2 1 Q2.2 0 3.3 0 Q4.5 0 4.5 1 L4.5 6 Q5 5 6 5.5 Q7 5 7.8 6 Q8.8 5.6 9.6 6.6 Q10.5 6.3 10.8 7.4 L10.8 11.5 Q10.5 14.5 7.5 14.5 L4.5 14.5 Q3 14.5 1.2 11.8 L-0.8 8.8 Q-1.2 7.6 0 7.4 Q1 7.4 2.2 9 Z" fill="#f3c268" stroke="#9a5a18" stroke-width="0.8"/></g>
<g transform="translate(469.5,528)"><path d="M2.2 1 Q2.2 0 3.3 0 Q4.5 0 4.5 1 L4.5 6 Q5 5 6 5.5 Q7 5 7.8 6 Q8.8 5.6 9.6 6.6 Q10.5 6.3 10.8 7.4 L10.8 11.5 Q10.5 14.5 7.5 14.5 L4.5 14.5 Q3 14.5 1.2 11.8 L-0.8 8.8 Q-1.2 7.6 0 7.4 Q1 7.4 2.2 9 Z" fill="#f3c268" stroke="#9a5a18" stroke-width="0.8"/></g>
<g transform="translate(765.5,543.5)"><path d="M2.2 1 Q2.2 0 3.3 0 Q4.5 0 4.5 1 L4.5 6 Q5 5 6 5.5 Q7 5 7.8 6 Q8.8 5.6 9.6 6.6 Q10.5 6.3 10.8 7.4 L10.8 11.5 Q10.5 14.5 7.5 14.5 L4.5 14.5 Q3 14.5 1.2 11.8 L-0.8 8.8 Q-1.2 7.6 0 7.4 Q1 7.4 2.2 9 Z" fill="#f3c268" stroke="#9a5a18" stroke-width="0.8"/></g>
<g transform="translate(793.0,551.5)"><path d="M2.2 1 Q2.2 0 3.3 0 Q4.5 0 4.5 1 L4.5 6 Q5 5 6 5.5 Q7 5 7.8 6 Q8.8 5.6 9.6 6.6 Q10.5 6.3 10.8 7.4 L10.8 11.5 Q10.5 14.5 7.5 14.5 L4.5 14.5 Q3 14.5 1.2 11.8 L-0.8 8.8 Q-1.2 7.6 0 7.4 Q1 7.4 2.2 9 Z" fill="#f3c268" stroke="#9a5a18" stroke-width="0.8"/></g>
<g transform="translate(810.0,557)"><path d="M2.2 1 Q2.2 0 3.3 0 Q4.5 0 4.5 1 L4.5 6 Q5 5 6 5.5 Q7 5 7.8 6 Q8.8 5.6 9.6 6.6 Q10.5 6.3 10.8 7.4 L10.8 11.5 Q10.5 14.5 7.5 14.5 L4.5 14.5 Q3 14.5 1.2 11.8 L-0.8 8.8 Q-1.2 7.6 0 7.4 Q1 7.4 2.2 9 Z" fill="#f3c268" stroke="#9a5a18" stroke-width="0.8"/></g>
<g transform="translate(827.0,559.5)"><path d="M2.2 1 Q2.2 0 3.3 0 Q4.5 0 4.5 1 L4.5 6 Q5 5 6 5.5 Q7 5 7.8 6 Q8.8 5.6 9.6 6.6 Q10.5 6.3 10.8 7.4 L10.8 11.5 Q10.5 14.5 7.5 14.5 L4.5 14.5 Q3 14.5 1.2 11.8 L-0.8 8.8 Q-1.2 7.6 0 7.4 Q1 7.4 2.2 9 Z" fill="#f3c268" stroke="#9a5a18" stroke-width="0.8"/></g>
<g transform="translate(844.0,560)"><path d="M2.2 1 Q2.2 0 3.3 0 Q4.5 0 4.5 1 L4.5 6 Q5 5 6 5.5 Q7 5 7.8 6 Q8.8 5.6 9.6 6.6 Q10.5 6.3 10.8 7.4 L10.8 11.5 Q10.5 14.5 7.5 14.5 L4.5 14.5 Q3 14.5 1.2 11.8 L-0.8 8.8 Q-1.2 7.6 0 7.4 Q1 7.4 2.2 9 Z" fill="#f3c268" stroke="#9a5a18" stroke-width="0.8"/></g>
<line x1="0" y1="630.5" x2="978" y2="630.5" stroke="#b00000" stroke-width="1"/>
<line x1="0" y1="646.5" x2="1130" y2="646.5" stroke="#b00000" stroke-width="1"/>
<line x1="152.5" y1="630" x2="152.5" y2="646" stroke="#b00000" stroke-width="1"/>
<text x="153.8" y="644" fill="#ff3232" font-size="12">4</text>
<line x1="270.5" y1="630" x2="270.5" y2="646" stroke="#b00000" stroke-width="1"/>
<text x="271.8" y="644" fill="#ff3232" font-size="12">5</text>
<line x1="376.5" y1="630" x2="376.5" y2="646" stroke="#b00000" stroke-width="1"/>
<text x="377.8" y="644" fill="#ff3232" font-size="12">6</text>
<line x1="488" y1="630" x2="488" y2="646" stroke="#b00000" stroke-width="1"/>
<text x="489.3" y="644" fill="#ff3232" font-size="12">7</text>
<line x1="617.5" y1="630" x2="617.5" y2="646" stroke="#b00000" stroke-width="1"/>
<text x="618.8" y="644" fill="#ff3232" font-size="12">8</text>
<line x1="735.5" y1="630" x2="735.5" y2="646" stroke="#b00000" stroke-width="1"/>
<text x="736.8" y="644" fill="#ff3232" font-size="12">9</text>
<line x1="858.5" y1="630" x2="858.5" y2="646" stroke="#b00000" stroke-width="1"/>
<text x="859.8" y="644" fill="#ff3232" font-size="12">10</text>
<line x1="953.5" y1="630" x2="953.5" y2="646" stroke="#b00000" stroke-width="1"/>
<text x="954.8" y="644" fill="#ff3232" font-size="12">11</text>
<text x="2.5" y="644" fill="#ff3232" font-size="12">2025年</text>
<line x1="64.5" y1="630" x2="64.5" y2="633" stroke="#b00000" stroke-width="1"/>
<line x1="94.5" y1="630" x2="94.5" y2="633" stroke="#b00000" stroke-width="1"/>
<line x1="123.5" y1="630" x2="123.5" y2="633" stroke="#b00000" stroke-width="1"/>
<line x1="183.5" y1="630" x2="183.5" y2="633" stroke="#b00000" stroke-width="1"/>
<line x1="211.5" y1="630" x2="211.5" y2="633" stroke="#b00000" stroke-width="1"/>
<line x1="239.5" y1="630" x2="239.5" y2="633" stroke="#b00000" stroke-width="1"/>
<line x1="298.5" y1="630" x2="298.5" y2="633" stroke="#b00000" stroke-width="1"/>
<line x1="325.5" y1="630" x2="325.5" y2="633" stroke="#b00000" stroke-width="1"/>
<line x1="351.5" y1="630" x2="351.5" y2="633" stroke="#b00000" stroke-width="1"/>
<line x1="405.5" y1="630" x2="405.5" y2="633" stroke="#b00000" stroke-width="1"/>
<line x1="432.5" y1="630" x2="432.5" y2="633" stroke="#b00000" stroke-width="1"/>
<line x1="460.5" y1="630" x2="460.5" y2="633" stroke="#b00000" stroke-width="1"/>
<line x1="520.5" y1="630" x2="520.5" y2="633" stroke="#b00000" stroke-width="1"/>
<line x1="548.5" y1="630" x2="548.5" y2="633" stroke="#b00000" stroke-width="1"/>
<line x1="577.5" y1="630" x2="577.5" y2="633" stroke="#b00000" stroke-width="1"/>
<line x1="647.5" y1="630" x2="647.5" y2="633" stroke="#b00000" stroke-width="1"/>
<line x1="676.5" y1="630" x2="676.5" y2="633" stroke="#b00000" stroke-width="1"/>
<line x1="706.5" y1="630" x2="706.5" y2="633" stroke="#b00000" stroke-width="1"/>
<line x1="764.5" y1="630" x2="764.5" y2="633" stroke="#b00000" stroke-width="1"/>
<line x1="796.5" y1="630" x2="796.5" y2="633" stroke="#b00000" stroke-width="1"/>
<line x1="826.5" y1="630" x2="826.5" y2="633" stroke="#b00000" stroke-width="1"/>
<line x1="886.5" y1="630" x2="886.5" y2="633" stroke="#b00000" stroke-width="1"/>
<line x1="906.5" y1="630" x2="906.5" y2="633" stroke="#b00000" stroke-width="1"/>
<line x1="929.5" y1="630" x2="929.5" y2="633" stroke="#b00000" stroke-width="1"/>
<line x1="968.5" y1="630" x2="968.5" y2="633" stroke="#b00000" stroke-width="1"/>
<line x1="0.5" y1="646" x2="0.5" y2="650" stroke="#b00000" stroke-width="1"/>
<line x1="42.5" y1="646" x2="42.5" y2="650" stroke="#b00000" stroke-width="1"/>
<line x1="73.5" y1="646" x2="73.5" y2="650" stroke="#b00000" stroke-width="1"/>
<line x1="115.5" y1="646" x2="115.5" y2="650" stroke="#b00000" stroke-width="1"/>
<line x1="144.5" y1="646" x2="144.5" y2="650" stroke="#b00000" stroke-width="1"/>
<line x1="177.5" y1="646" x2="177.5" y2="650" stroke="#b00000" stroke-width="1"/>
<line x1="207.5" y1="646" x2="207.5" y2="650" stroke="#b00000" stroke-width="1"/>
<line x1="241.5" y1="646" x2="241.5" y2="650" stroke="#b00000" stroke-width="1"/>
<line x1="282.5" y1="646" x2="282.5" y2="650" stroke="#b00000" stroke-width="1"/>
<line x1="308.5" y1="646" x2="308.5" y2="650" stroke="#b00000" stroke-width="1"/>
<line x1="332.5" y1="646" x2="332.5" y2="650" stroke="#b00000" stroke-width="1"/>
<line x1="364.5" y1="646" x2="364.5" y2="650" stroke="#b00000" stroke-width="1"/>
<line x1="389.5" y1="646" x2="389.5" y2="650" stroke="#b00000" stroke-width="1"/>
<line x1="422.5" y1="646" x2="422.5" y2="650" stroke="#b00000" stroke-width="1"/>
<line x1="480.5" y1="646" x2="480.5" y2="650" stroke="#b00000" stroke-width="1"/>
<line x1="508.5" y1="646" x2="508.5" y2="650" stroke="#b00000" stroke-width="1"/>
<line x1="536.5" y1="646" x2="536.5" y2="650" stroke="#b00000" stroke-width="1"/>
<line x1="568.5" y1="646" x2="568.5" y2="650" stroke="#b00000" stroke-width="1"/>
<line x1="599.5" y1="646" x2="599.5" y2="650" stroke="#b00000" stroke-width="1"/>
<line x1="628.5" y1="646" x2="628.5" y2="650" stroke="#b00000" stroke-width="1"/>
<line x1="663.5" y1="646" x2="663.5" y2="650" stroke="#b00000" stroke-width="1"/>
<line x1="690.5" y1="646" x2="690.5" y2="650" stroke="#b00000" stroke-width="1"/>
<line x1="765.5" y1="646" x2="765.5" y2="650" stroke="#b00000" stroke-width="1"/>
<line x1="807.5" y1="646" x2="807.5" y2="650" stroke="#b00000" stroke-width="1"/>
<line x1="839.5" y1="646" x2="839.5" y2="650" stroke="#b00000" stroke-width="1"/>
<line x1="871.5" y1="646" x2="871.5" y2="650" stroke="#b00000" stroke-width="1"/>
<rect x="8" y="648" width="2" height="2" fill="#d0d0d0"/>
<rect x="12" y="648" width="2" height="2" fill="#d0d0d0"/>
<rect x="19" y="648" width="2" height="2" fill="#d0d0d0"/>
<rect x="51" y="648" width="1" height="2" fill="#d0d0d0"/>
<rect x="827" y="648" width="1" height="2" fill="#d0d0d0"/>
<rect x="846" y="648" width="6" height="2" fill="#54ffff"/><rect x="855" y="648" width="11" height="2" fill="#54ffff"/>
<rect x="978" y="600" width="152" height="50" fill="#000"/>
<text x="998.5" y="626.5" fill="#fff" font-size="19.5" font-weight="bold" style="letter-spacing:1.1px">乐淘公式网</text>
<text x="1000.5" y="644" fill="#fff" font-size="15" font-weight="bold" font-family="'Liberation Serif', serif">www.60lt.com</text>
<rect x="1077" y="507" width="48" height="16" fill="#000080"/>
<line x1="1077" y1="507.5" x2="1125" y2="507.5" stroke="#b00000" stroke-width="1"/>
<line x1="1077" y1="523" x2="1125" y2="523" stroke="#b00000" stroke-width="1"/>
<text x="1077" y="519.5" fill="#d0d0d0" font-size="12">17.59</text>
</svg></body></html>
